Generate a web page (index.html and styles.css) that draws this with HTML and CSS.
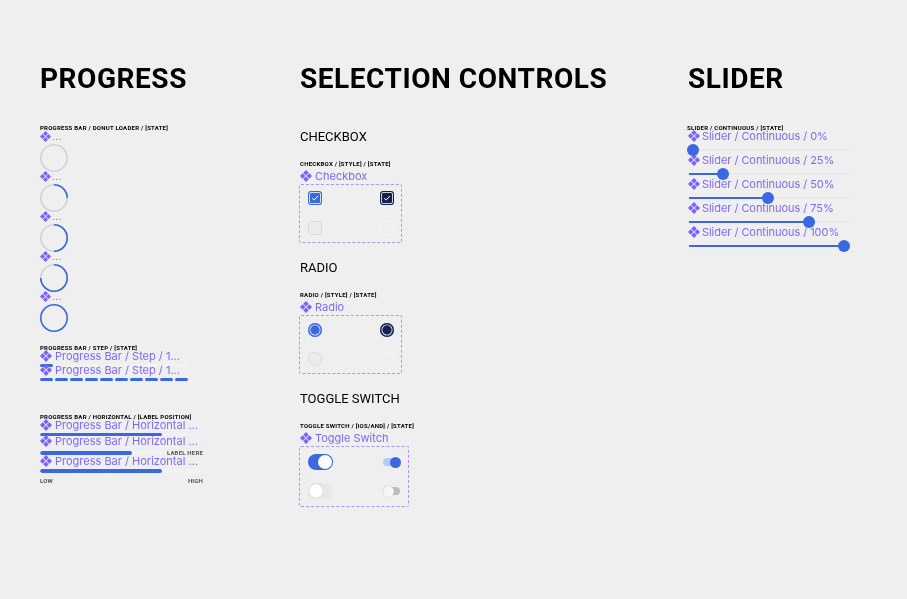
FILE: index.html
```html
<!DOCTYPE html>
<html lang="en">
<head>
<meta charset="utf-8">
<title>Components</title>
<link rel="stylesheet" href="styles.css">
</head>
<body>
<svg class="defs" width="0" height="0" aria-hidden="true">
  <symbol id="cmp" viewBox="0 0 12 12"><path d="M6 0 8.7 2.7 6 5.4 3.3 2.7ZM2.7 3.3 5.4 6 2.7 8.7 0 6ZM9.3 3.3 12 6 9.3 8.7 6.6 6ZM6 6.6 8.7 9.3 6 12 3.3 9.3Z"/></symbol>
  <symbol id="chk" viewBox="0 0 14 14"><rect x="1.5" y="1.5" width="11" height="11" rx="1.5" fill="none" stroke="#fff" stroke-width=".8"/><path d="M4.2 7.2 6.2 9.1 9.9 5" fill="none" stroke="#fff" stroke-width="1"/></symbol>
</svg>
<main class="canvas">
  <section class="col col-progress">
    <h1>PROGRESS</h1>
    <h3 class="spec spec-first">PROGRESS BAR / DONUT LOADER / [STATE]</h3>
    <div class="donut-row"><div class="tag tag-tiny"><svg class="ic"><use href="#cmp"/></svg><span>...</span></div>
      <svg class="donut" viewBox="0 0 28 28"><circle class="d-bg" cx="14" cy="14" r="13.2"/></svg></div>
    <div class="donut-row"><div class="tag tag-tiny"><svg class="ic"><use href="#cmp"/></svg><span>...</span></div>
      <svg class="donut" viewBox="0 0 28 28"><circle class="d-bg" cx="14" cy="14" r="13.2"/><circle class="d-fg" cx="14" cy="14" r="13.2" pathLength="100" stroke-dasharray="25 75"/></svg></div>
    <div class="donut-row"><div class="tag tag-tiny"><svg class="ic"><use href="#cmp"/></svg><span>...</span></div>
      <svg class="donut" viewBox="0 0 28 28"><circle class="d-bg" cx="14" cy="14" r="13.2"/><circle class="d-fg" cx="14" cy="14" r="13.2" pathLength="100" stroke-dasharray="50 50"/></svg></div>
    <div class="donut-row"><div class="tag tag-tiny"><svg class="ic"><use href="#cmp"/></svg><span>...</span></div>
      <svg class="donut" viewBox="0 0 28 28"><circle class="d-bg" cx="14" cy="14" r="13.2"/><circle class="d-fg" cx="14" cy="14" r="13.2" pathLength="100" stroke-dasharray="75 25"/></svg></div>
    <div class="donut-row"><div class="tag tag-tiny"><svg class="ic"><use href="#cmp"/></svg><span>...</span></div>
      <svg class="donut" viewBox="0 0 28 28"><circle class="d-fg d-full" cx="14" cy="14" r="13.2"/></svg></div>

    <h3 class="spec spec-step">PROGRESS BAR / STEP / [STATE]</h3>
    <div class="step-row">
      <div class="tag"><svg class="ic"><use href="#cmp"/></svg><span>Progress Bar / Step / 1...</span></div>
      <div class="steps"><i class="on"></i><i></i><i></i><i></i><i></i><i></i><i></i><i></i><i></i><i></i></div>
    </div>
    <div class="step-row">
      <div class="tag"><svg class="ic"><use href="#cmp"/></svg><span>Progress Bar / Step / 1...</span></div>
      <div class="steps"><i class="on"></i><i class="on"></i><i class="on"></i><i class="on"></i><i class="on"></i><i class="on"></i><i class="on"></i><i class="on"></i><i class="on"></i><i class="on"></i></div>
    </div>

    <h3 class="spec spec-horiz">PROGRESS BAR / HORIZONTAL / [LABEL POSITION]</h3>
    <div class="h-row h-a">
      <div class="tag"><svg class="ic"><use href="#cmp"/></svg><span>Progress Bar / Horizontal ...</span></div>
      <div class="bar"><b class="fill-75"></b></div>
    </div>
    <div class="h-row h-b">
      <div class="tag"><svg class="ic"><use href="#cmp"/></svg><span>Progress Bar / Horizontal ...</span></div>
      <div class="bar-line"><div class="bar bar-thick"><b class="fill-75"></b></div><span class="cap">LABEL HERE</span></div>
    </div>
    <div class="h-row h-c">
      <div class="tag"><svg class="ic"><use href="#cmp"/></svg><span>Progress Bar / Horizontal ...</span></div>
      <div class="bar bar-thick"><b class="fill-75"></b></div>
      <div class="caps"><span class="cap">LOW</span><span class="cap">HIGH</span></div>
    </div>
  </section>

  <section class="col col-select">
    <h1>SELECTION CONTROLS</h1>
    <h2 class="first">CHECKBOX</h2>
    <h3 class="spec">CHECKBOX / [STYLE] / [STATE]</h3>
    <div class="tag tag-block"><svg class="ic"><use href="#cmp"/></svg><span>Checkbox</span></div>
    <div class="dash dash-check">
      <span class="cb cb-blue"><svg><use href="#chk"/></svg></span>
      <span class="cb cb-navy"><svg><use href="#chk"/></svg></span>
      <span class="cb cb-off"></span>
      <span class="cb cb-off2"></span>
    </div>
    <h2>RADIO</h2>
    <h3 class="spec">RADIO / [STYLE] / [STATE]</h3>
    <div class="tag tag-block"><svg class="ic"><use href="#cmp"/></svg><span>Radio</span></div>
    <div class="dash dash-radio">
      <span class="rd rd-blue"></span>
      <span class="rd rd-navy"></span>
      <span class="rd rd-off"></span>
      <span class="rd rd-off2"></span>
    </div>
    <h2>TOGGLE SWITCH</h2>
    <h3 class="spec">TOGGLE SWITCH / [IOS/AND] / [STATE]</h3>
    <div class="tag tag-block"><svg class="ic"><use href="#cmp"/></svg><span>Toggle Switch</span></div>
    <div class="dash dash-toggle">
      <span class="ios ios-on"><em></em></span>
      <span class="and and-on"><em></em></span>
      <span class="ios ios-off"><em></em></span>
      <span class="and and-off"><em></em></span>
    </div>
  </section>

  <section class="col col-slider">
    <h1>SLIDER</h1>
    <h3 class="spec spec-first">SLIDER / CONTINUOUS / [STATE]</h3>
    <div class="slide-row">
      <div class="tag"><svg class="ic"><use href="#cmp"/></svg><span>Slider / Continuous / 0%</span></div>
      <div class="track"><b style="width:4px"></b></div>
    </div>
    <div class="slide-row">
      <div class="tag"><svg class="ic"><use href="#cmp"/></svg><span>Slider / Continuous / 25%</span></div>
      <div class="track"><b style="width:34px"></b></div>
    </div>
    <div class="slide-row">
      <div class="tag"><svg class="ic"><use href="#cmp"/></svg><span>Slider / Continuous / 50%</span></div>
      <div class="track"><b style="width:79px"></b></div>
    </div>
    <div class="slide-row">
      <div class="tag"><svg class="ic"><use href="#cmp"/></svg><span>Slider / Continuous / 75%</span></div>
      <div class="track"><b style="width:120px"></b></div>
    </div>
    <div class="slide-row">
      <div class="tag"><svg class="ic"><use href="#cmp"/></svg><span>Slider / Continuous / 100%</span></div>
      <div class="track"><b style="width:155px"></b></div>
    </div>
  </section>
</main>
</body>
</html>
```
FILE: styles.css
```css
* { box-sizing: border-box; }
html, body { margin: 0; height: 100%; }
body { background: #efefef; font-family: Inter, "Liberation Sans", sans-serif; color: #111; overflow: hidden; }
.defs { position: absolute; }
.canvas { display: flex; padding: 60px 0 0 40px; will-change: transform; }
.col-progress { width: 260px; }
.col-select { width: 388px; }
.col-slider { width: 219px; }

h1 { margin: 1px 0 -1px; font-family: Roboto, sans-serif; font-size: 28px; line-height: 36px; font-weight: 700; letter-spacing: .55px; white-space: nowrap; color: #000; }
h2 { margin: 16px 0 16px; padding-top: 1px; height: 16px; font-family: Roboto, sans-serif; font-size: 13px; line-height: 16px; font-weight: 400; color: #000; }
h2.first { margin-top: 32px; }

.spec { margin: 0 0 1px; font-family: Roboto, sans-serif; font-size: 6px; line-height: 8px; font-weight: 700; letter-spacing: .25px; white-space: nowrap; color: #000; }
.spec-first { margin: 28px 0 0; }
.spec-step { margin: 12px 0 -3px; }
.spec-horiz { margin: 36px 0 -3px; }
.col-slider .spec { margin-left: -1px; margin-bottom: -3px; }

.tag { display: flex; align-items: center; gap: 3px; height: 14px; font-size: 11px; line-height: 14px; color: #7f68ff; white-space: nowrap; }
.tag-block { margin-bottom: 1px; }
.ic { width: 12px; height: 12px; fill: #7b61ff; flex: none; }
.tag-tiny { align-items: flex-start; height: 12px; font-size: 8px; line-height: 10px; font-weight: 700; letter-spacing: .7px; gap: 1px; }
.tag-tiny .ic { width: 11px; height: 11px; margin: -1px 0 0 0; }
.col-slider .tag { gap: 2px; letter-spacing: -.05px; }

.donut-row { height: 40px; }
.donut { display: block; width: 28px; height: 28px; }
.donut circle { fill: none; stroke-width: 1.6; }
.d-bg { stroke: #cfd3d8; }
.d-fg { stroke: #3a68e0; transform: rotate(-90deg); transform-origin: 14px 14px; }

.step-row { height: 14px; }
.steps { display: flex; gap: 2px; width: 148px; margin-top: 1px; }
.steps i { flex: 1; height: 3px; border-radius: 2px; background: #f3f3f3; }
.steps i.on { background: #3a68e0; }

.bar { height: 3px; background: #f2f2f4; border-radius: 2px; width: 163px; margin-top: 1px; overflow: hidden; }
.bar b { display: block; height: 100%; background: #3a68e0; border-radius: 2px; }
.bar-thick { height: 4px; }
.fill-75 { width: 75%; }
.h-a { height: 16px; }
.h-b { height: 20px; }
.bar-line { display: flex; align-items: center; justify-content: space-between; width: 163px; margin-top: 1px; }
.bar-line .bar { width: 122px; margin: 0; }
.cap { font-family: Roboto, sans-serif; font-size: 6px; line-height: 8px; font-weight: 700; color: #555; letter-spacing: .2px; }
.caps { display: flex; justify-content: space-between; width: 163px; margin-top: 4px; }

.dash { margin-left: -1px; border: 1px dashed #a995ff; border-radius: 2px; display: grid; justify-content: space-between; }
.dash-check { width: 103px; height: 59px; padding: 6px 7px 0 8px; grid-template-columns: 14px 14px; grid-auto-rows: 14px; row-gap: 16px; }
.dash-radio { width: 103px; height: 59px; padding: 7px 7px 0 8px; grid-template-columns: 14px 14px; grid-auto-rows: 14px; row-gap: 15px; }
.dash-toggle { width: 110px; height: 61px; padding: 7px 7px 0 8px; grid-template-columns: 25px 18px; grid-auto-rows: 16px; row-gap: 13px; }

.cb { display: block; width: 14px; height: 14px; border-radius: 3px; }
.cb svg { display: block; width: 14px; height: 14px; }
.cb-blue { background: #3a68e0; }
.cb-navy { background: #14224f; }
.cb-off { border: 1px solid #d9d9dc; background: #ececec; }
.cb-off2 { border: 1px solid #f6f6f6; background: #efefef; }

.rd { display: block; width: 14px; height: 14px; border-radius: 50%; }
.rd-blue { background: #3a68e0; box-shadow: inset 0 0 0 1.5px #3a68e0, inset 0 0 0 2.3px #e8edfb; }
.rd-navy { background: #14224f; box-shadow: inset 0 0 0 1.5px #14224f, inset 0 0 0 2.3px #e8edfb; }
.rd-off { border: 1px solid #d9d9dc; background: #ececec; }
.rd-off2 { border: 1px solid #f6f6f6; background: #efefef; }

.ios { position: relative; display: block; width: 25px; height: 16px; border-radius: 8px; }
.ios em { position: absolute; top: 1px; width: 14px; height: 14px; border-radius: 50%; background: #fff; box-shadow: 0 0 1px rgba(0,0,0,.3); }
.ios-on { background: #3a68e0; }
.ios-on em { right: 1px; }
.ios-off { background: #e7e8eb; }
.ios-off em { left: 1px; }

.and { position: relative; display: block; width: 18px; height: 16px; }
.and::before { content: ""; position: absolute; left: 0; right: 1px; top: 4px; height: 8px; border-radius: 4px; }
.and em { position: absolute; top: 2.5px; width: 11px; height: 11px; border-radius: 50%; }
.and-on::before { background: #b9c9f6; }
.and-on em { right: 0; background: #3a68e0; }
.and-off::before { background: #bdbdbd; }
.and-off em { left: 0; background: #f6f6f6; box-shadow: 0 0 1px rgba(0,0,0,.25); }

.slide-row { height: 24px; }
.track { position: relative; width: 160px; height: 2px; margin: 6px 0 0 1px; background: #e9e9e9; }
.track b { position: absolute; left: 0; top: 0; height: 2px; background: #3a68e0; }
.track b::after { content: ""; position: absolute; right: -6px; top: -5px; width: 12px; height: 12px; border-radius: 50%; background: #3a68e0; }
```
